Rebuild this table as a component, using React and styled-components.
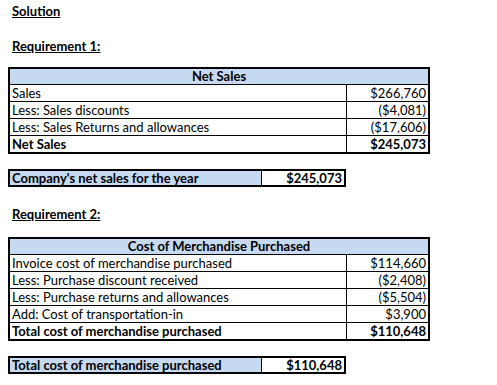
import React from "react"
import styled, { createGlobalStyle } from "styled-components"

const GlobalStyle = createGlobalStyle`
  body {
    margin: 0;
    background: #ffffff;
    color: #000000;
    font-family: Lato, "Liberation Sans", sans-serif;
    font-size: 13px;
  }
`

const Page = styled.div`
  width: 497px;
  height: 385px;
  padding: 3px 0 0 8px;
  box-sizing: border-box;
  display: flex;
  flex-direction: column;
`

const Heading = styled.div`
  font-weight: bold;
  text-decoration: underline;
  padding-left: 4px;
  height: 17px;
  line-height: 17px;
  margin-bottom: ${(p) => p.$gap}px;
`

const Table = styled.div`
  width: ${(p) => p.$width}px;
  border: 2px solid #000;
  box-sizing: border-box;
  margin-bottom: ${(p) => p.$gap}px;
`

const HeaderRow = styled.div`
  height: 15px;
  line-height: 15px;
  background: #c5d9f1;
  text-align: center;
  font-weight: bold;
`

const Row = styled.div`
  display: grid;
  grid-template-columns: ${(p) => p.$cols};
  height: ${(p) => (p.$single ? 14 : 16)}px;
  line-height: ${(p) => (p.$single ? 14 : 16)}px;
  border-top: ${(p) => (p.$single ? "none" : "1px solid #000")};
  font-weight: ${(p) => (p.$bold ? "bold" : "normal")};
`

const Label = styled.div`
  padding-left: 2px;
  white-space: nowrap;
  background: ${(p) => (p.$fill ? "#c5d9f1" : "transparent")};
`

const Value = styled.div`
  border-left: 1px solid #000;
  text-align: right;
  padding-right: 2px;
  white-space: nowrap;
`

const cols = "336px 1fr"

const salesRows = [
  ["Sales", "$266,760"],
  ["Less: Sales discounts", "($4,081)"],
  ["Less: Sales Returns and allowances", "($17,606)"],
  ["Net Sales", "$245,073", true],
]

const costRows = [
  ["Invoice cost of merchandise purchased", "$114,660"],
  ["Less: Purchase discount received", "($2,408)"],
  ["Less: Purchase returns and allowances", "($5,504)"],
  ["Add: Cost of transportation-in", "$3,900"],
  ["Total cost of merchandise purchased", "$110,648", true],
]

const DataTable = ({ title, rows, gap }) => (
  <Table $width={422} $gap={gap}>
    <HeaderRow>{title}</HeaderRow>
    {rows.map(([label, value, bold]) => (
      <Row key={label} $cols={cols} $bold={bold}>
        <Label>{label}</Label>
        <Value>{value}</Value>
      </Row>
    ))}
  </Table>
)

const Summary = ({ label, value, gap }) => (
  <Table $width={338} $gap={gap}>
    <Row $cols="251px 1fr" $single $bold>
      <Label $fill>{label}</Label>
      <Value>{value}</Value>
    </Row>
  </Table>
)

export default function App() {
  return (
    <>
      <GlobalStyle />
      <Page>
        <Heading $gap={18}>Solution</Heading>
        <Heading $gap={12}>Requirement 1:</Heading>
        <DataTable title="Net Sales" rows={salesRows} gap={15} />
        <Summary label="Company's net sales for the year" value="$245,073" gap={19} />
        <Heading $gap={14}>Requirement 2:</Heading>
        <DataTable title="Cost of Merchandise Purchased" rows={costRows} gap={15} />
        <Summary label="Total cost of merchandise purchased" value="$110,648" gap={0} />
      </Page>
    </>
  )
}
